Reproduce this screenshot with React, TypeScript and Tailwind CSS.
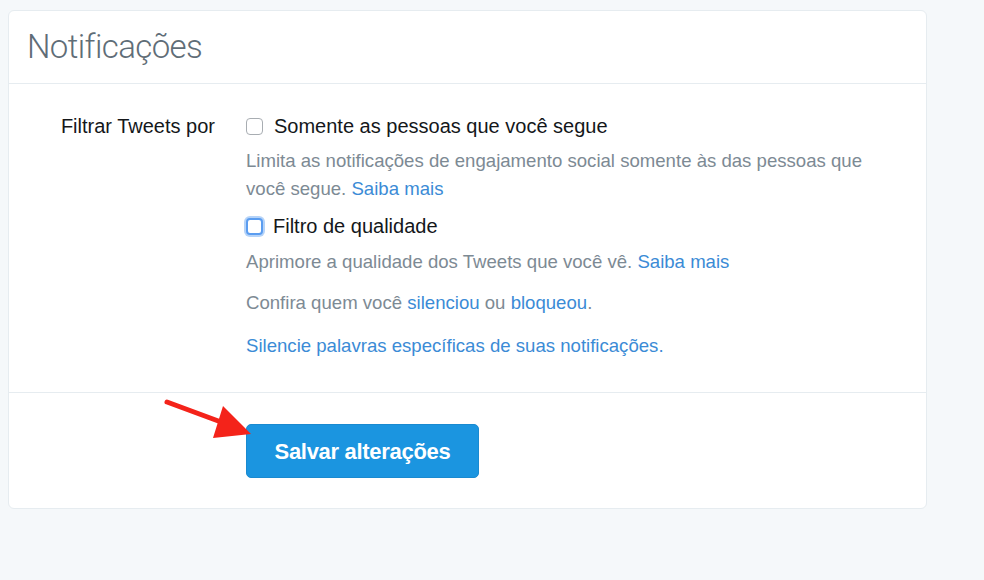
import React from 'react'

function Checkbox({ focused = false }: { focused?: boolean }) {
    return (
        <span
            className={
                'inline-block w-[17px] h-[17px] rounded-[4px] bg-white shrink-0 ' +
                (focused
                    ? 'border-2 border-[#5b9df0] shadow-[0_0_0_2px_rgba(91,157,240,0.45)]'
                    : 'border border-[#a8adb2]')
            }
        />
    )
}

export default function App() {
    const font = { fontFamily: '"Liberation Sans", Arial, sans-serif' }

    return (
        <div className="min-h-screen bg-[#f5f8fa] pt-[10px] pl-[8px]" style={font}>
            <div className="relative w-[919px] h-[499px] bg-white border border-[#e6ecf0] rounded-[6px] flex flex-col">
                {/* Header */}
                <div className="h-[73px] border-b border-[#e6ecf0] flex items-center pl-[18px] shrink-0">
                    <h1
                        className="text-[33px] font-light text-[#5f6d77] tracking-[-0.6px]"
                        style={{ fontFamily: 'Roboto, "Liberation Sans", sans-serif' }}
                    >
                        Notificações
                    </h1>
                </div>

                {/* Body */}
                <div className="h-[309px] border-b border-[#e6ecf0] pt-[28px] flex shrink-0">
                    <div className="w-[206px] text-right text-[20px] leading-[28px] text-[#14171a]">
                        Filtrar Tweets por
                    </div>
                    <div className="pl-[31px] flex flex-col">
                        <label className="flex items-center gap-[11px] text-[20px] leading-[28px] text-[#14171a]">
                            <Checkbox />
                            Somente as pessoas que você segue
                        </label>
                        <p className="mt-[7px] text-[18.6px] leading-[28px] text-[#7d8a94] w-[640px]">
                            Limita as notificações de engajamento social somente às das pessoas que você segue.{' '}
                            <a className="text-[#3b8bd6]">Saiba mais</a>
                        </p>
                        <label className="mt-[9px] flex items-center gap-[10px] text-[20px] leading-[28px] text-[#14171a]">
                            <Checkbox focused />
                            Filtro de qualidade
                        </label>
                        <p className="mt-[8px] text-[18.6px] leading-[28px] text-[#7d8a94]">
                            Aprimore a qualidade dos Tweets que você vê.{' '}
                            <a className="text-[#3b8bd6]">Saiba mais</a>
                        </p>
                        <p className="mt-[13px] text-[18.6px] leading-[28px] text-[#7d8a94]">
                            Confira quem você <a className="text-[#3b8bd6]">silenciou</a> ou{' '}
                            <a className="text-[#3b8bd6]">bloqueou</a>.
                        </p>
                        <p className="mt-[15px] text-[18.6px] leading-[28px] text-[#3b8bd6]">
                            Silencie palavras específicas de suas notificações.
                        </p>
                    </div>
                </div>

                {/* Footer */}
                <div className="flex-1 pt-[31px] pl-[237px]">
                    <button className="w-[233px] h-[54px] rounded-[5px] bg-[#1b95e0] border border-[#1a8ad0] text-white font-bold text-[22px] tracking-[-0.3px]">
                        Salvar alterações
                    </button>
                </div>

                {/* Red annotation arrow */}
                <svg
                    className="absolute left-[150px] top-[385px] pointer-events-none"
                    width="110"
                    height="60"
                    viewBox="0 0 110 60"
                >
                    <line x1="8" y1="6" x2="62" y2="26" stroke="#f4231a" strokeWidth="5" strokeLinecap="round" />
                    <polygon points="64,10 54,42 92,38" fill="#f4231a" />
                </svg>
            </div>
        </div>
    )
}
